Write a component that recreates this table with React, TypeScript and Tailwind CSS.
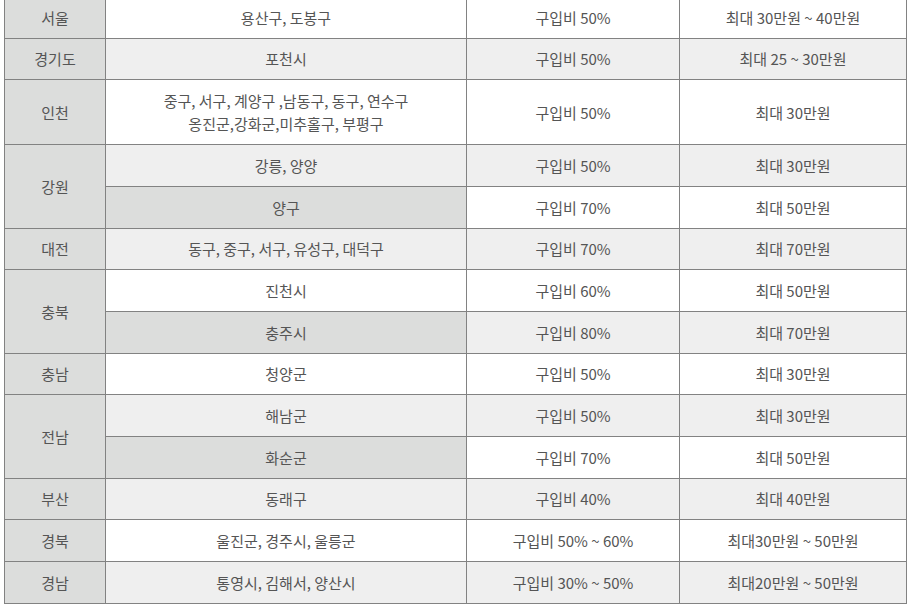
const rows: { region?: string; span?: number; area: React.ReactNode; rate: string; max: string }[] = [
  { region: '서울', area: '용산구, 도봉구', rate: '구입비 50%', max: '최대 30만원 ~ 40만원' },
  { region: '경기도', area: '포천시', rate: '구입비 50%', max: '최대 25 ~ 30만원' },
  {
    region: '인천',
    area: (
      <>
        중구, 서구, 계양구 ,남동구, 동구, 연수구
        <br />
        옹진군,강화군,미추홀구, 부평구
      </>
    ),
    rate: '구입비 50%',
    max: '최대 30만원',
  },
  { region: '강원', span: 2, area: '강릉, 양양', rate: '구입비 50%', max: '최대 30만원' },
  { area: '양구', rate: '구입비 70%', max: '최대 50만원' },
  { region: '대전', area: '동구, 중구, 서구, 유성구, 대덕구', rate: '구입비 70%', max: '최대 70만원' },
  { region: '충북', span: 2, area: '진천시', rate: '구입비 60%', max: '최대 50만원' },
  { area: '충주시', rate: '구입비 80%', max: '최대 70만원' },
  { region: '충남', area: '청양군', rate: '구입비 50%', max: '최대 30만원' },
  { region: '전남', span: 2, area: '해남군', rate: '구입비 50%', max: '최대 30만원' },
  { area: '화순군', rate: '구입비 70%', max: '최대 50만원' },
  { region: '부산', area: '동래구', rate: '구입비 40%', max: '최대 40만원' },
  { region: '경북', area: '울진군, 경주시, 울릉군', rate: '구입비 50% ~ 60%', max: '최대30만원 ~ 50만원' },
  { region: '경남', area: '통영시, 김해서, 양산시', rate: '구입비 30% ~ 50%', max: '최대20만원 ~ 50만원' },
]

const cell = 'border border-[#828282] text-center align-middle py-[8.7px] leading-[23.3px]'

export default function App() {
  return (
    <div
      className="bg-white min-h-screen overflow-hidden text-[15px] text-[#555555]"
      style={{ fontFamily: '"Noto Sans CJK KR", "Noto Sans", sans-serif' }}
    >
      <table className="ml-[4px] -mt-[4px] w-[902px] border-collapse table-fixed">
        <colgroup>
          <col className="w-[101px]" />
          <col className="w-[361px]" />
          <col className="w-[213px]" />
          <col className="w-[227px]" />
        </colgroup>
        <tbody>
          {rows.map((r, i) => {
            const stripe = i % 2 === 1 ? 'bg-[#efefef]' : 'bg-white'
            return (
              <tr key={i} className={stripe}>
                {r.region && (
                  <td rowSpan={r.span} className={`${cell} bg-[#dcdddc]`}>
                    {r.region}
                  </td>
                )}
                <td className={`${cell} ${r.region ? '' : 'bg-[#dcdddc]'}`}>{r.area}</td>
                <td className={cell}>{r.rate}</td>
                <td className={cell}>{r.max}</td>
              </tr>
            )
          })}
        </tbody>
      </table>
    </div>
  )
}
